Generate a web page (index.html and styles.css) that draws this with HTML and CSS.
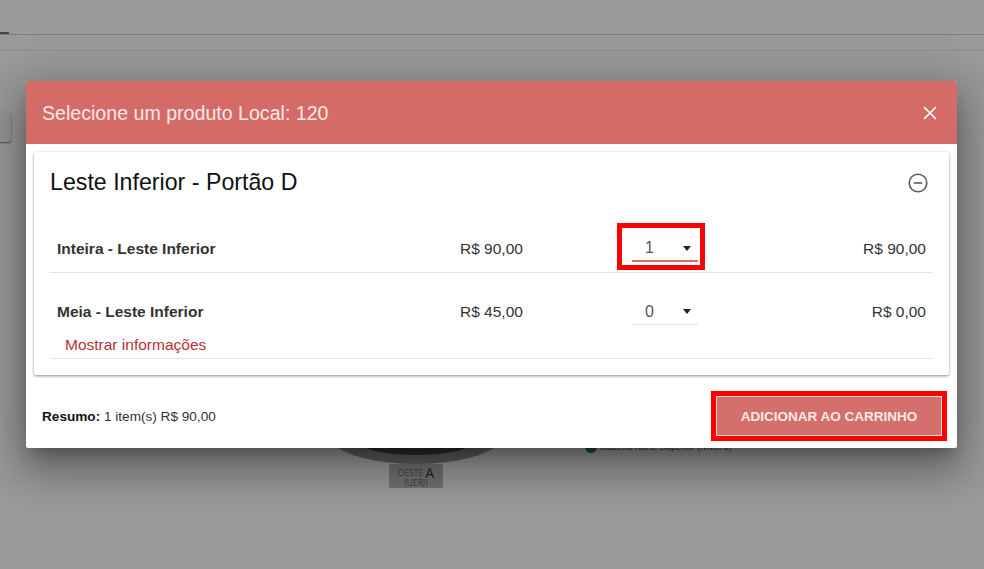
FILE: index.html
```html
<!DOCTYPE html>
<html lang="pt-BR">
<head>
<meta charset="utf-8">
<title>Selecione um produto</title>
<link rel="stylesheet" href="styles.css">
</head>
<body>
<div class="page">
  <div class="tabs"><span class="tab-mark"></span></div>
  <div class="subbar"></div>
  <div class="side-btn"></div>
  <div class="stadium">
    <div class="ring"><div class="pit"></div></div>
    <div class="gate"><span class="gate-top">OESTE <b>A</b></span><span class="gate-sub">(UERJ)</span></div>
  </div>
  <div class="legend"><span class="dot"></span><span class="legend-text">Cadeira Norte Superior (Nível 3)</span></div>

  <div class="modal">
    <header class="modal-head">
      <h1 class="modal-title">Selecione um produto Local: 120</h1>
      <svg class="close" viewBox="0 0 16 16" width="16" height="16"><path d="M2 2L14 14M14 2L2 14"/></svg>
    </header>
    <div class="modal-body">
      <section class="card">
        <div class="card-head">
          <h2 class="card-title">Leste Inferior - Portão D</h2>
          <svg class="collapse" viewBox="0 0 20 20" width="20" height="20"><circle cx="10" cy="10" r="8.8"/><path d="M5.8 10H14.2"/></svg>
        </div>
        <div class="row row-first">
          <span class="name">Inteira - Leste Inferior</span>
          <span class="price">R$ 90,00</span>
          <div class="qty-wrap qty-mark">
            <div class="qty qty-on"><span class="qty-val">1</span><span class="arrow"></span></div>
          </div>
          <span class="total">R$ 90,00</span>
        </div>
        <div class="row row-second">
          <span class="name">Meia - Leste Inferior</span>
          <span class="price">R$ 45,00</span>
          <div class="qty-wrap">
            <div class="qty"><span class="qty-val">0</span><span class="arrow"></span></div>
          </div>
          <span class="total">R$ 0,00</span>
        </div>
        <div class="more"><a class="more-link">Mostrar informações</a></div>
      </section>
    </div>
    <footer class="modal-foot">
      <p class="summary"><b>Resumo:</b> 1 item(s) R$ 90,00</p>
      <div class="add-mark"><button class="add">ADICIONAR AO CARRINHO</button></div>
    </footer>
  </div>
</div>
</body>
</html>
```
FILE: styles.css
```css
* { box-sizing: border-box; }
html, body { margin: 0; height: 100%; }
body { font-family: "Liberation Sans", Arial, sans-serif; background: #999; overflow: hidden; }
.page { position: relative; width: 984px; height: 569px; overflow: hidden; background: #9a9a9a; }

.tabs { height: 35px; border-bottom: 1px solid #7e7e7e; position: relative; }
.tab-mark { position: absolute; left: 0; bottom: 0; width: 9px; height: 2px; background: #444; }
.subbar { height: 16px; border-bottom: 1px solid #8c8c8c; }
.side-btn { position: absolute; left: -6px; top: 112px; width: 17px; height: 30px; border-radius: 3px; background: #959595; box-shadow: 0 1px 2px rgba(0,0,0,.5); }

.stadium { position: absolute; left: 328px; top: 420px; width: 176px; }
.ring { height: 44px; border-radius: 0 0 88px 88px / 0 0 30px 30px; background: #5e5e5e; display: flex; justify-content: center; }
.pit { width: 112px; height: 35px; border-radius: 0 0 56px 56px / 0 0 13px 13px; background: #2c2c2c; }
.gate { position: relative; margin: 0 0 0 61px; width: 54px; height: 24px; background: #717171; display: flex; flex-direction: column; align-items: center; color: #3f3f3f; font-family: "Open Sans", sans-serif; font-size: 8.5px; line-height: 9px; padding-top: 4px; }
.gate-top { display: flex; align-items: flex-end; gap: 2px; height: 10px; line-height: 10px; }
.gate-top b { display: block; height: 10px; font-size: 14px; font-weight: 400; line-height: 10px; color: #222; }
.gate-sub { display: block; height: 9px; }

.legend { position: absolute; left: 585px; top: 441px; display: flex; align-items: center; gap: 3px; font-size: 9.2px; color: #333; height: 12px; }
.dot { width: 12px; height: 12px; border-radius: 50%; background: #1d4a2e; }

.modal { position: absolute; left: 26px; top: 81px; width: 931px; height: 367px; background: #fff; border-radius: 2px; display: flex; flex-direction: column; box-shadow: 0 11px 15px -7px rgba(0,0,0,.25), 0 24px 38px 3px rgba(0,0,0,.2), 0 9px 46px 8px rgba(0,0,0,.22); }
.modal-head { height: 63px; flex: none; background: #d46b66; border-radius: 2px 2px 0 0; display: flex; align-items: center; justify-content: space-between; padding: 0 19px 0 16px; color: #fde9e8; }
.modal-title { margin: 0; padding-top: 2px; font-size: 19.6px; font-weight: 400; }
.close { fill: none; stroke: #fff; stroke-width: 1.7; }

.modal-body { padding: 8px 8px 0; flex: none; }
.card { height: 223px; background: #fff; border-radius: 2px; padding: 0 16px; box-shadow: 0 1px 3px rgba(0,0,0,.45); }
.card-head { height: 62px; display: flex; align-items: center; justify-content: space-between; padding-right: 5px; }
.card-title { margin: 0 0 2px; font-size: 23.2px; font-weight: 400; color: #111; }
.collapse { fill: none; stroke: #5c5c5c; stroke-width: 1.6; }

.row { display: grid; grid-template-columns: 403px 170px 1fr 120px; align-items: center; font-size: 15.5px; color: #333; padding: 0 7px; }
.row-first { height: 59px; padding-top: 9px; border-bottom: 1px solid #e4e4e4; }
.row-second { height: 63px; padding-top: 13px; }
.name { font-weight: 700; color: #333; }
.total { text-align: right; }
.qty-wrap { width: 88px; height: 47px; margin: 0 0 5px -13px; border: 5px solid transparent; padding: 0 2px 3px 0; display: flex; align-items: flex-end; justify-content: flex-end; }
.qty-mark { border-color: #f00; }
.qty { width: 66px; height: 26px; border-bottom: 1px solid #e2e2e2; display: flex; align-items: center; justify-content: space-between; padding: 0 7px 0 13px; color: #555; font-size: 16px; }
.qty-on { border-bottom: 2px solid #d46b66; }
.arrow { width: 0; height: 0; border: 4.5px solid transparent; border-top: 5px solid #222; border-bottom: 0; }

.more { height: 23px; padding-left: 15px; border-bottom: 1px solid #e4e4e4; color: #b73038; font-size: 15.5px; line-height: 17px; }
.more-link { display: block; }

.modal-foot { flex: 1; display: flex; align-items: center; justify-content: space-between; padding: 9px 10px 0 16px; }
.summary { margin: 0; font-size: 13.6px; color: #333; }
.summary b { color: #111; }
.add-mark { border: 5px solid #f00; width: 236px; height: 50px; display: flex; }
.add { flex: 1; background: #d46f6b; color: #fde9e8; border: 1px solid #f3dcda; border-radius: 2px; font: 700 13.5px "Liberation Sans", Arial, sans-serif; padding: 0; }
```
